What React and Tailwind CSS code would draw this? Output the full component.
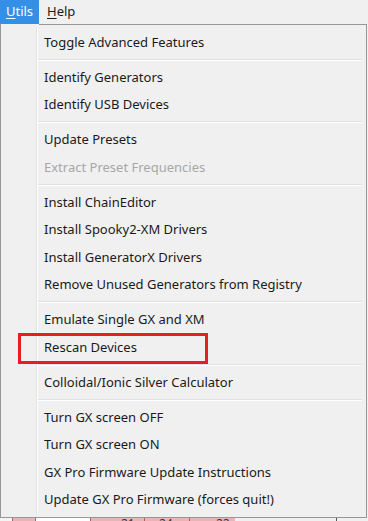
import React from "react";

const groups = [
  [{ t: "Toggle Advanced Features" }],
  [{ t: "Identify Generators" }, { t: "Identify USB Devices" }],
  [{ t: "Update Presets" }, { t: "Extract Preset Frequencies", d: true }],
  [
    { t: "Install ChainEditor" },
    { t: "Install Spooky2-XM Drivers" },
    { t: "Install GeneratorX Drivers" },
    { t: "Remove Unused Generators from Registry" },
  ],
  [{ t: "Emulate Single GX and XM" }, { t: "Rescan Devices", r: true }],
  [{ t: "Colloidal/Ionic Silver Calculator" }],
  [
    { t: "Turn GX screen OFF" },
    { t: "Turn GX screen ON" },
    { t: "GX Pro Firmware Update Instructions" },
    { t: "Update GX Pro Firmware (forces quit!)" },
  ],
];

function Item({ t, d, r }) {
  return (
    <div className="relative flex h-[27.5px] items-center">
      <div className="w-[36px] shrink-0" />
      <span
        className={
          "pl-[7px] text-[13px] leading-none " +
          (d ? "text-[#a7a7a7]" : "text-[#1a1a1a]")
        }
      >
        {t}
      </span>
      {r && (
        <div className="absolute left-[17px] top-[-1px] h-[31px] w-[190px] border-[3px] border-[#e31e24]" />
      )}
    </div>
  );
}

function Sep() {
  return (
    <div className="flex h-[7.5px] items-center pl-[37px] pr-[4px]">
      <div className="w-full border-t border-[#e0e0e0] border-b border-b-white" />
    </div>
  );
}

export default function App() {
  return (
    <div
      className="relative h-[521px] w-[368px] overflow-hidden bg-[#f0f0f0]"
      style={{ fontFamily: '"Noto Sans", "Open Sans", sans-serif' }}
    >
      {/* menu bar */}
      <div className="flex h-[24px] items-stretch bg-[#f0f0f0] text-[13px]">
        <div className="flex w-[39px] items-center justify-center bg-[#3390e6] text-white">
          <span>
            <span className="underline underline-offset-2">U</span>tils
          </span>
        </div>
        <div className="flex items-center pl-[8px] text-[#1a1a1a]">
          <span>
            <span className="underline underline-offset-2">H</span>elp
          </span>
        </div>
      </div>
      {/* popup top edge */}
      <div className="flex h-[1px] w-[367px]">
        <div className="h-full w-[1px] bg-[#979797]" />
        <div className="h-full w-[38px] bg-[#f0f0f0]" />
        <div className="h-full flex-1 bg-[#979797]" />
      </div>
      {/* popup */}
      <div className="relative w-[367px] border border-t-0 border-[#979797] bg-[#f0f0f0] pt-[3.5px] pb-[3px]">
        <div className="absolute left-[35px] top-[2px] bottom-[2px] w-[2px] border-l border-[#e2e3e3] border-r border-r-white" />
        {groups.map((g, gi) => (
          <div key={gi}>
            {gi > 0 && <Sep />}
            {g.map((it) => (
              <Item key={it.t} {...it} />
            ))}
          </div>
        ))}
      </div>
      {/* background strip */}
      <div className="flex h-[10px] items-start text-[12px] leading-none text-[#333]">
        <div className="h-full w-[12px] bg-[#f4f4f4]" />
        <div className="h-full w-[24px] border-x border-[#b06060] bg-[#e8b4b4]" />
        <div className="h-full w-[54px] bg-white" />
        <div className="h-full w-[55px] border-x border-[#b06060] bg-[#e8b4b4] pl-[30px]">21</div>
        <div className="h-full w-[45px] border-r border-[#b06060] bg-[#e8b4b4] pl-[14px]">24</div>
        <div className="h-full w-[45px] bg-[#e8b4b4] pl-[26px]">22</div>
        <div className="h-full w-[101px] bg-[#f0f0f0]" />
        <div className="h-full w-[1px] bg-[#555]" />
        <div className="h-full flex-1 bg-[#f0f0f0]" />
      </div>
    </div>
  );
}
